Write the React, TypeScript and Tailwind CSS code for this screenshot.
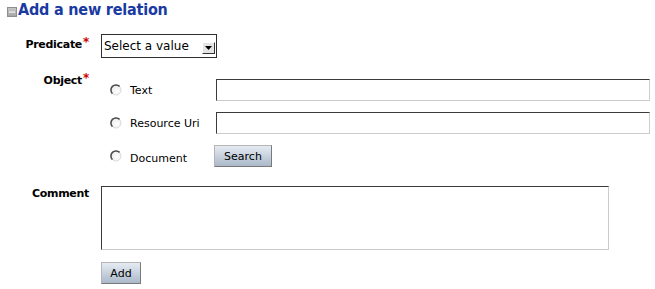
import React from "react";

function MinusIcon() {
  return (
    <svg width="10" height="10" viewBox="0 0 10 10" className="mt-[7px] shrink-0">
      <defs>
        <linearGradient id="mg" x1="0" y1="0" x2="0" y2="1">
          <stop offset="0" stopColor="#c8c8c8" />
          <stop offset="1" stopColor="#a4a4a4" />
        </linearGradient>
      </defs>
      <rect x="0.5" y="0.5" width="9" height="9" fill="url(#mg)" stroke="#8e8e8e" />
      <rect x="2" y="4.5" width="6" height="1.2" fill="#f4f4f4" />
    </svg>
  );
}

function Radio() {
  return (
    <svg width="12" height="12" viewBox="0 0 12 12" className="shrink-0">
      <defs>
        <radialGradient id="rg" cx="0.6" cy="0.6" r="0.6">
          <stop offset="0" stopColor="#ffffff" />
          <stop offset="1" stopColor="#ececec" />
        </radialGradient>
      </defs>
      <circle cx="6" cy="6" r="5" fill="url(#rg)" stroke="#dadada" strokeWidth="1" />
      <path d="M 2.4 9.6 A 5 5 0 0 1 9.6 2.4" fill="none" stroke="#4a4a4a" strokeWidth="1.5" />
    </svg>
  );
}

function Label({ text, required, className = "" }: { text: string; required?: boolean; className?: string }) {
  return (
    <div className={"w-[89px] shrink-0 text-right text-[11px] font-bold leading-[13px] tracking-[-0.3px] " + className}>
      {text}
      {required && <span className="relative -top-[2px] ml-[1px] text-[12px] text-[#cc0000]">*</span>}
    </div>
  );
}

function Button({ children, className = "" }: { children: React.ReactNode; className?: string }) {
  return (
    <button
      className={
        "h-[22px] shrink-0 border border-t-[#b5b5b5] border-l-[#b5b5b5] border-r-[#7a7a7a] border-b-[#7a7a7a] bg-linear-to-b from-[#e6ebf2] to-[#abb9ca] text-[11px] leading-[20px] pt-[1px] text-black " +
        className
      }
    >
      {children}
    </button>
  );
}

const inputCls =
  "h-[22px] border border-t-[#3a3a3a] border-l-[#3a3a3a] border-r-[#cccccc] border-b-[#cccccc] bg-white";

export default function App() {
  return (
    <div className="w-[655px] h-[289px] overflow-hidden bg-white font-['DejaVu_Sans',sans-serif] text-black">
      <div className="flex items-start h-[20px] pl-[7px]">
        <MinusIcon />
        <h2 className="ml-[1px] text-[16px] leading-[20px] font-bold tracking-[-0.2px] text-[#1a3aa2] font-['DejaVu_Sans_Condensed','DejaVu_Sans',sans-serif]">
          Add a new relation
        </h2>
      </div>

      <div className="flex mt-[14px]">
        <Label text="Predicate" required className="pt-[4px]" />
        <div className="ml-[12px] w-[116px] h-[24px] border border-[#2e2e2e] flex items-end pb-[3px] pl-[2px] pr-[1px]">
          <span className="flex-1 text-[12px] leading-[15px] whitespace-nowrap">Select a value</span>
          <span className="w-[13px] h-[12px] bg-[#e4e4e4] border border-t-[#ffffff] border-l-[#ffffff] border-r-[#333333] border-b-[#333333] flex items-center justify-center">
            <svg width="7" height="4" viewBox="0 0 7 4">
              <path d="M0 0 H7 L3.5 4 Z" fill="#000" />
            </svg>
          </span>
        </div>
      </div>

      <div className="flex mt-[15px]">
        <Label text="Object" required className="pt-[1px]" />
        <div className="ml-[12px] pl-[9px] pt-[6px] flex flex-col gap-[11px]">
          <div className="flex items-center h-[22px]">
            <Radio />
            <span className="ml-[8px] w-[86px] text-[11px] leading-[13px]">Text</span>
            <div className={inputCls + " w-[434px]"} />
          </div>
          <div className="flex items-center h-[22px]">
            <Radio />
            <span className="ml-[8px] w-[86px] text-[11px] leading-[13px] whitespace-nowrap">Resource Uri</span>
            <div className={inputCls + " w-[434px]"} />
          </div>
          <div className="flex items-center h-[22px]">
            <Radio />
            <span className="ml-[8px] w-[86px] text-[11px] leading-[13px] pt-[4px]">Document</span>
            <Button className="-ml-[2px] w-[58px]">Search</Button>
          </div>
        </div>
      </div>

      <div className="flex mt-[19px]">
        <Label text="Comment" className="pt-[1px]" />
        <div className={"ml-[12px] w-[508px] h-[64px] border border-t-[#3a3a3a] border-l-[#3a3a3a] border-r-[#cccccc] border-b-[#cccccc]"} />
      </div>

      <div className="flex mt-[12px] pl-[101px]">
        <Button className="w-[40px]">Add</Button>
      </div>
    </div>
  );
}
